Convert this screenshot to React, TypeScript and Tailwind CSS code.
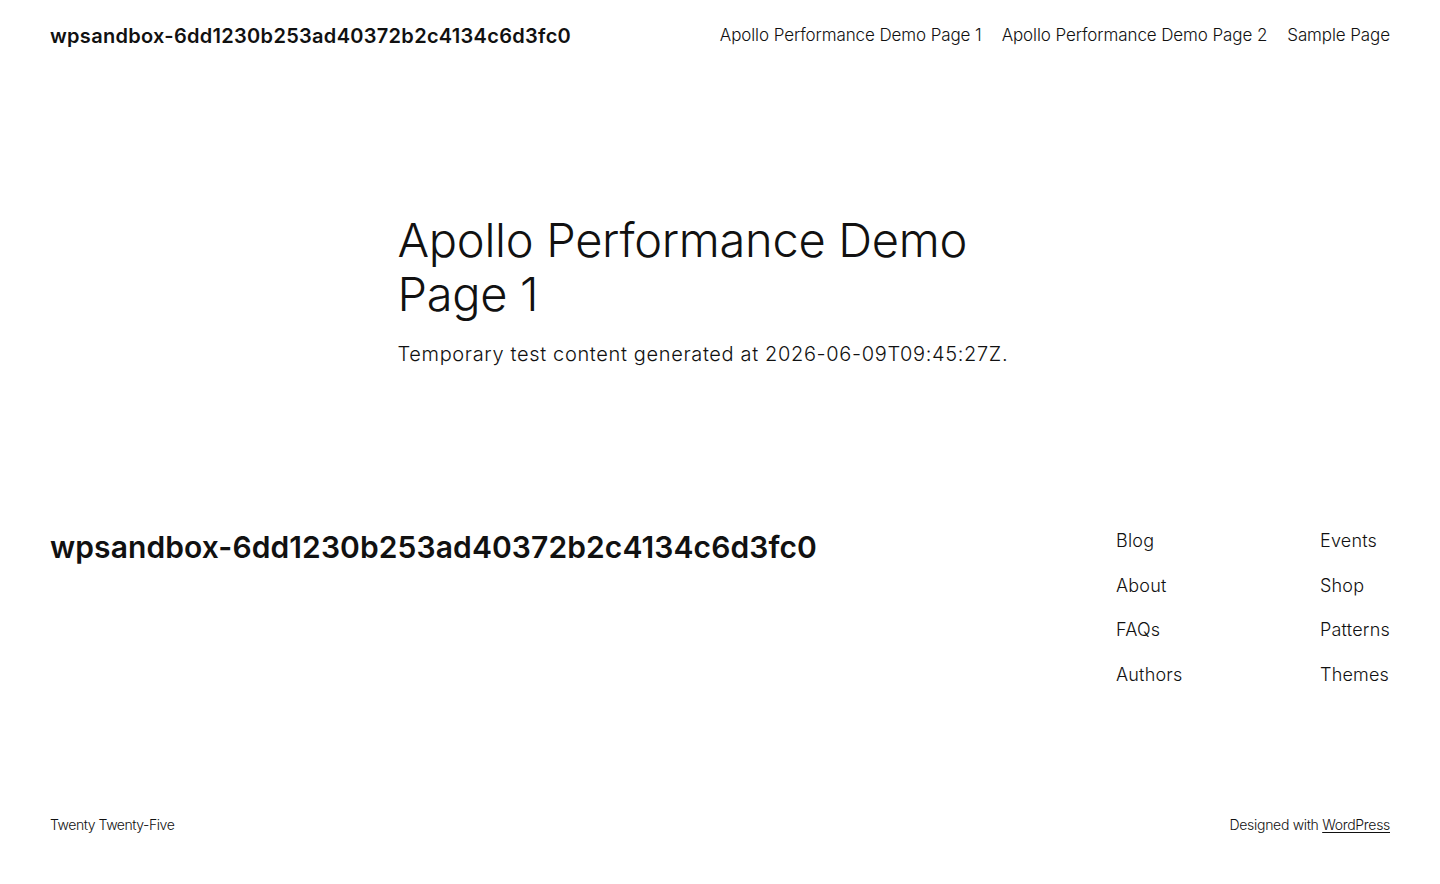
import React from 'react';

const navLinks = ['Apollo Performance Demo Page 1', 'Apollo Performance Demo Page 2', 'Sample Page'];
const footerCol1 = ['Blog', 'About', 'FAQs', 'Authors'];
const footerCol2 = ['Events', 'Shop', 'Patterns', 'Themes'];

export default function App() {
  return (
    <div className="min-h-[884px] bg-white text-[#111111] font-['Inter',_'Noto_Sans',_sans-serif] flex flex-col">
      {/* Header */}
      <header className="flex h-[72px] items-center justify-between px-[50px]">
        <a href="#" className="text-[20px] font-semibold tracking-[0.3px]">
          wpsandbox-6dd1230b253ad40372b2c4134c6d3fc0
        </a>
        <nav className="flex items-center gap-[20px] text-[17px] font-light tracking-[-0.1px]">
          {navLinks.map((l) => (
            <a key={l} href="#">{l}</a>
          ))}
        </nav>
      </header>

      {/* Content */}
      <main className="mx-auto w-[645px] pt-[141px]">
        <h1 className="text-[47px] leading-[54px] font-light tracking-[-0.3px]">
          Apollo Performance Demo Page 1
        </h1>
        <p className="mt-[20px] text-[20px] leading-[26px] font-light tracking-[0.65px]">
          Temporary test content generated at 2026-06-09T09:45:27Z.
        </p>
      </main>

      {/* Footer */}
      <footer className="mt-[154px] px-[50px]">
        <div className="flex items-start justify-between">
          <a href="#" className="text-[30px] font-semibold tracking-[0.1px] leading-[40px] pt-[6px]">
            wpsandbox-6dd1230b253ad40372b2c4134c6d3fc0
          </a>
          <div className="flex pt-[7px]">
            <ul className="w-[204px] flex flex-col gap-[19px] text-[18px] font-light tracking-[0.2px] leading-[25.5px]">
              {footerCol1.map((l) => (
                <li key={l}><a href="#">{l}</a></li>
              ))}
            </ul>
            <ul className="w-[70px] flex flex-col gap-[19px] text-[18px] font-light tracking-[0.2px] leading-[25.5px]">
              {footerCol2.map((l) => (
                <li key={l} className="whitespace-nowrap"><a href="#">{l}</a></li>
              ))}
            </ul>
          </div>
        </div>
        <div className="mt-[127px] flex items-center justify-between text-[14px] font-light tracking-[-0.3px]">
          <span className="tracking-[-0.45px]">Twenty Twenty-Five</span>
          <span>
            Designed with <a href="#" className="underline underline-offset-2">WordPress</a>
          </span>
        </div>
      </footer>
    </div>
  );
}
